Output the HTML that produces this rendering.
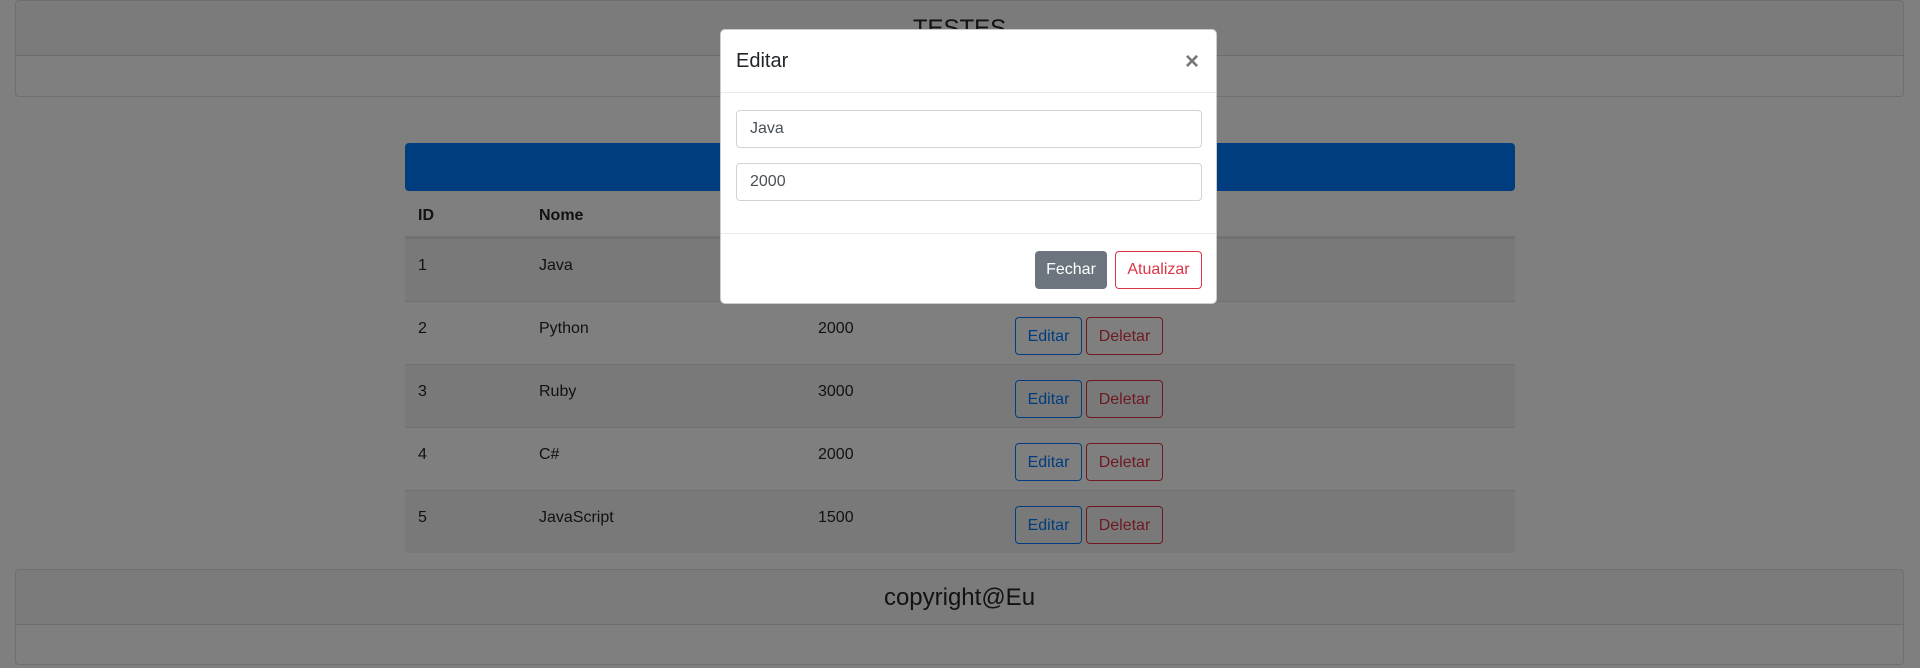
<!DOCTYPE html>
<html><head><meta charset="utf-8"><style>
*{box-sizing:border-box;margin:0;padding:0}
body{width:1920px;height:668px;overflow:hidden;background:#fff;font-family:"Liberation Sans",sans-serif;color:#212529;position:relative;font-size:16px}
.abs{position:absolute}
.card{position:absolute;left:15px;width:1889px;border:1px solid rgba(0,0,0,.125);border-radius:4px;background:#fff}
.card .hd{background:rgba(0,0,0,.03);border-bottom:1px solid rgba(0,0,0,.125);text-align:center}
.row{position:absolute;left:405px;width:1110px;height:63px;border-top:1px solid #dee2e6}
.row.s{background:rgba(0,0,0,.05)}
.row span{position:absolute;top:18px}
.b{position:absolute;top:15px;height:38px;border:1px solid;border-radius:4px;font-size:16px;line-height:38px;text-align:center}
.be{left:610px;width:67px;border-color:#007bff;color:#007bff}
.bd{left:681px;width:77px;border-color:#dc3545;color:#dc3545}
.ov{position:absolute;left:0;top:0;width:1920px;height:668px;background:rgba(0,0,0,.5)}
.modal{position:absolute;left:720px;top:29px;width:497px;height:275px;background:#fff;border-radius:5px;border:1px solid rgba(0,0,0,.2)}
.inp{position:absolute;left:15px;width:466px;height:38px;border:1px solid #ced4da;border-radius:4px;padding-left:13px;line-height:36px;color:#495057}
</style></head><body>
<div class="card" style="top:0;height:97px"><div class="hd" style="height:55px;font-size:24px;line-height:56px">TESTES</div></div>
<div class="abs" style="left:405px;top:143px;width:1110px;height:48px;background:#007bff;border-radius:4px"></div>
<div class="abs" style="left:405px;top:191px;width:1110px;height:47px;border-bottom:2px solid #dee2e6;font-weight:bold">
<span class="abs" style="left:13px;top:16px">ID</span><span class="abs" style="left:134px;top:16px">Nome</span></div>
<div class="row s" style="top:238px"><span style="left:13px">1</span><span style="left:134px">Java</span><span style="left:413px">1000</span><div class="b be">Editar</div><div class="b bd">Deletar</div></div>
<div class="row" style="top:301px"><span style="left:13px">2</span><span style="left:134px">Python</span><span style="left:413px">2000</span><div class="b be">Editar</div><div class="b bd">Deletar</div></div>
<div class="row s" style="top:364px"><span style="left:13px">3</span><span style="left:134px">Ruby</span><span style="left:413px">3000</span><div class="b be">Editar</div><div class="b bd">Deletar</div></div>
<div class="row" style="top:427px"><span style="left:13px">4</span><span style="left:134px">C#</span><span style="left:413px">2000</span><div class="b be">Editar</div><div class="b bd">Deletar</div></div>
<div class="row s" style="top:490px"><span style="left:13px">5</span><span style="left:134px">JavaScript</span><span style="left:413px">1500</span><div class="b be">Editar</div><div class="b bd">Deletar</div></div>
<div class="card" style="top:569px;height:96px"><div class="hd" style="height:55px;font-size:24px;line-height:56px">copyright@Eu</div></div>
<div class="ov"></div>
<div class="modal">
<div class="abs" style="left:15px;top:20px;font-size:20px">Editar</div>
<div class="abs" style="left:464px;top:18px;font-size:24px;color:#777;font-weight:bold">×</div>
<div class="abs" style="left:0;top:62px;width:495px;border-top:1px solid #e9ecef"></div>
<div class="inp" style="top:80px">Java</div>
<div class="inp" style="top:133px">2000</div>
<div class="abs" style="left:0;top:203px;width:495px;border-top:1px solid #e9ecef"></div>
<div class="abs" style="left:314px;top:221px;width:72px;height:38px;background:#6c757d;color:#fff;border-radius:4px;text-align:center;line-height:38px">Fechar</div>
<div class="abs" style="left:394px;top:221px;width:87px;height:38px;border:1px solid #dc3545;color:#dc3545;border-radius:4px;text-align:center;line-height:36px">Atualizar</div>
</div>
</body></html>
